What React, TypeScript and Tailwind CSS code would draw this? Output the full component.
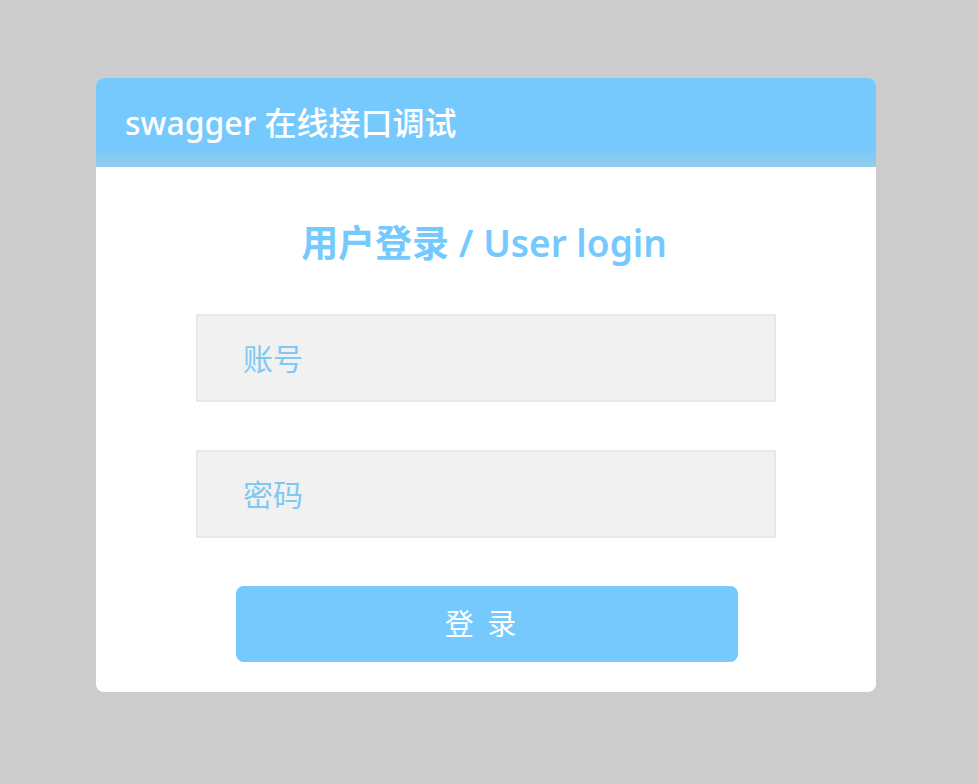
export default function App() {
  const font = {
    fontFamily: '"Noto Sans", "Noto Sans CJK SC", sans-serif',
  };

  return (
    <div
      className="flex min-h-[784px] w-full items-start bg-[#cccccc] pt-[78px] pl-[96px]"
      style={font}
    >
      <div className="w-[780px] overflow-hidden rounded-lg bg-white">
        {/* header */}
        <div className="flex h-[89px] items-center bg-[linear-gradient(to_bottom,#76c9fd_0%,#76c9fd_78%,#93cde8_100%)] pl-[29px]">
          <h1 className="text-[32px] leading-none font-medium text-white">
            swagger 在线接口调试
          </h1>
        </div>

        <div className="flex flex-col items-center pt-[52px] pb-[30px]">
          <h2 className="pr-[4px] text-[37px] leading-[48px] font-semibold text-[#76c9fc]">
            用户登录 / User login
          </h2>

          <div className="mt-[47px] flex flex-col gap-[48px]">
            <input
              type="text"
              placeholder="账号"
              className="h-[88px] w-[580px] border-2 border-[#e8e8e8] bg-[#f1f1f1] pl-[45px] text-[30px] outline-none placeholder:text-[#7fc8f2]"
            />
            <input
              type="password"
              placeholder="密码"
              className="h-[88px] w-[580px] border-2 border-[#e8e8e8] bg-[#f1f1f1] pl-[45px] text-[30px] outline-none placeholder:text-[#7fc8f2]"
            />
          </div>

          <button className="mt-[48px] ml-[2px] h-[76px] w-[502px] rounded-lg bg-[#76c9fd] pr-[10px] text-[29px] tracking-[3px] text-white">
            登 录
          </button>
        </div>
      </div>
    </div>
  );
}
